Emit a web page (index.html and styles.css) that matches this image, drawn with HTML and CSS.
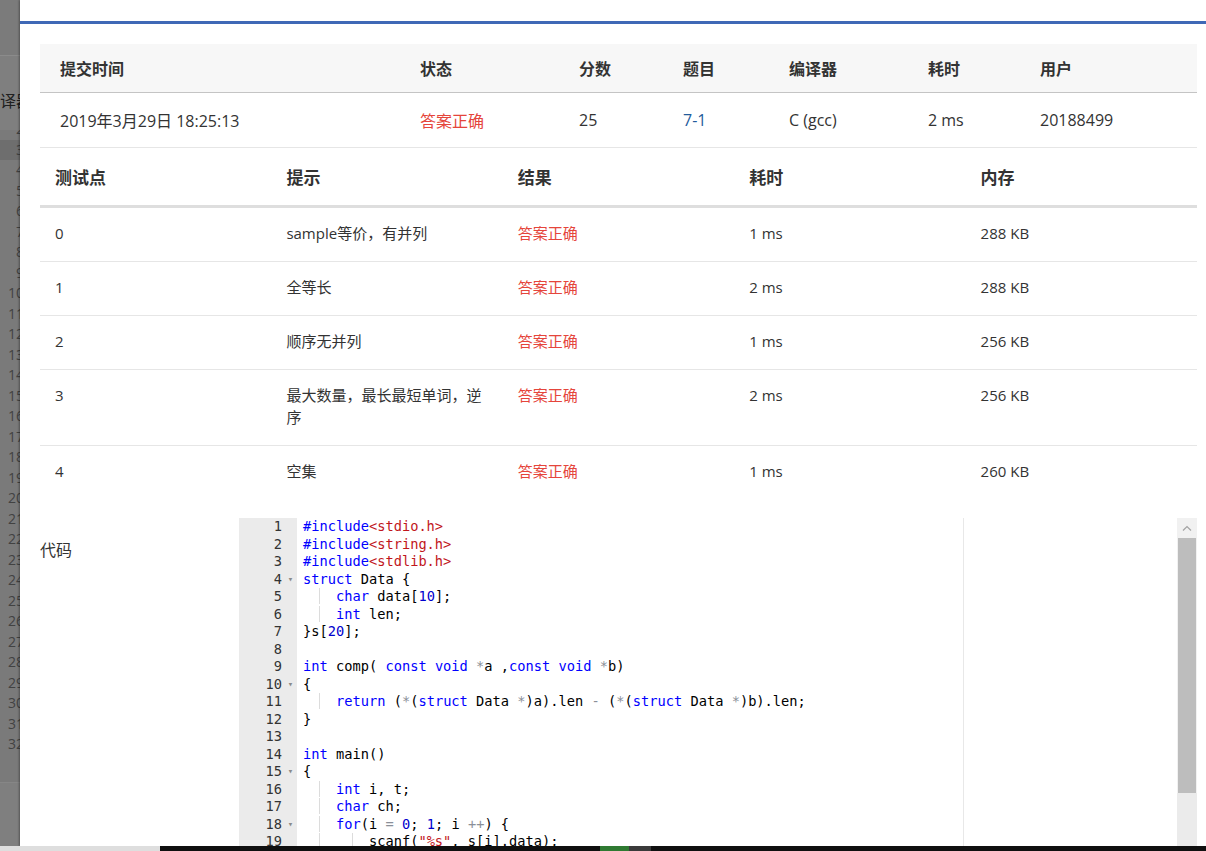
FILE: index.html
```html
<!DOCTYPE html>
<html lang="zh-CN">
<head>
<meta charset="utf-8">
<title>提交详情</title>
<link rel="stylesheet" href="styles.css">
</head>
<body>
<div class="screen">
  <aside class="backdrop">
    <div class="bd-top"></div>
    <div class="bd-label">编译器</div>
    <div class="bd-lines">
      <div class="bd-inner">
        <div class="bd-ln">2</div>
        <div class="bd-ln active">3</div>
        <div class="bd-ln">4</div>
        <div class="bd-ln">5</div>
        <div class="bd-ln">6</div>
        <div class="bd-ln">7</div>
        <div class="bd-ln">8</div>
        <div class="bd-ln">9</div>
        <div class="bd-ln">10</div>
        <div class="bd-ln">11</div>
        <div class="bd-ln">12</div>
        <div class="bd-ln">13</div>
        <div class="bd-ln">14</div>
        <div class="bd-ln">15</div>
        <div class="bd-ln">16</div>
        <div class="bd-ln">17</div>
        <div class="bd-ln">18</div>
        <div class="bd-ln">19</div>
        <div class="bd-ln">20</div>
        <div class="bd-ln">21</div>
        <div class="bd-ln">22</div>
        <div class="bd-ln">23</div>
        <div class="bd-ln">24</div>
        <div class="bd-ln">25</div>
        <div class="bd-ln">26</div>
        <div class="bd-ln">27</div>
        <div class="bd-ln">28</div>
        <div class="bd-ln">29</div>
        <div class="bd-ln">30</div>
        <div class="bd-ln">31</div>
        <div class="bd-ln">32</div>
      </div>
    </div>
    <div class="bd-bottom"></div>
  </aside>

  <main class="modal">
    <div class="modal-bar"></div>
    <div class="modal-body">
      <div class="summary">
        <div class="s-cell s-head">提交时间</div>
        <div class="s-cell s-head">状态</div>
        <div class="s-cell s-head">分数</div>
        <div class="s-cell s-head">题目</div>
        <div class="s-cell s-head">编译器</div>
        <div class="s-cell s-head">耗时</div>
        <div class="s-cell s-head">用户</div>
        <div class="s-cell">2019年3月29日 18:25:13</div>
        <div class="s-cell ok">答案正确</div>
        <div class="s-cell">25</div>
        <div class="s-cell link">7-1</div>
        <div class="s-cell">C (gcc)</div>
        <div class="s-cell">2 ms</div>
        <div class="s-cell">20188499</div>
      </div>

      <div class="cases">
        <div class="c-cell c-head">测试点</div>
        <div class="c-cell c-head">提示</div>
        <div class="c-cell c-head">结果</div>
        <div class="c-cell c-head">耗时</div>
        <div class="c-cell c-head">内存</div>

        <div class="c-cell">0</div>
        <div class="c-cell">sample等价，有并列</div>
        <div class="c-cell ok">答案正确</div>
        <div class="c-cell">1 ms</div>
        <div class="c-cell">288 KB</div>

        <div class="c-cell">1</div>
        <div class="c-cell">全等长</div>
        <div class="c-cell ok">答案正确</div>
        <div class="c-cell">2 ms</div>
        <div class="c-cell">288 KB</div>

        <div class="c-cell">2</div>
        <div class="c-cell">顺序无并列</div>
        <div class="c-cell ok">答案正确</div>
        <div class="c-cell">1 ms</div>
        <div class="c-cell">256 KB</div>

        <div class="c-cell">3</div>
        <div class="c-cell">最大数量，最长最短单词，逆序</div>
        <div class="c-cell ok">答案正确</div>
        <div class="c-cell">2 ms</div>
        <div class="c-cell">256 KB</div>

        <div class="c-cell last">4</div>
        <div class="c-cell last">空集</div>
        <div class="c-cell last ok">答案正确</div>
        <div class="c-cell last">1 ms</div>
        <div class="c-cell last">260 KB</div>
      </div>

      <div class="code-row">
        <div class="code-label">代码</div>
        <div class="editor">
          <div class="gutter">
            <div class="g-ln"><span class="g-num">1</span><span class="g-fold"></span></div>
            <div class="g-ln"><span class="g-num">2</span><span class="g-fold"></span></div>
            <div class="g-ln"><span class="g-num">3</span><span class="g-fold"></span></div>
            <div class="g-ln"><span class="g-num">4</span><span class="g-fold">▾</span></div>
            <div class="g-ln"><span class="g-num">5</span><span class="g-fold"></span></div>
            <div class="g-ln"><span class="g-num">6</span><span class="g-fold"></span></div>
            <div class="g-ln"><span class="g-num">7</span><span class="g-fold"></span></div>
            <div class="g-ln"><span class="g-num">8</span><span class="g-fold"></span></div>
            <div class="g-ln"><span class="g-num">9</span><span class="g-fold"></span></div>
            <div class="g-ln"><span class="g-num">10</span><span class="g-fold">▾</span></div>
            <div class="g-ln"><span class="g-num">11</span><span class="g-fold"></span></div>
            <div class="g-ln"><span class="g-num">12</span><span class="g-fold"></span></div>
            <div class="g-ln"><span class="g-num">13</span><span class="g-fold"></span></div>
            <div class="g-ln"><span class="g-num">14</span><span class="g-fold"></span></div>
            <div class="g-ln"><span class="g-num">15</span><span class="g-fold">▾</span></div>
            <div class="g-ln"><span class="g-num">16</span><span class="g-fold"></span></div>
            <div class="g-ln"><span class="g-num">17</span><span class="g-fold"></span></div>
            <div class="g-ln"><span class="g-num">18</span><span class="g-fold">▾</span></div>
            <div class="g-ln"><span class="g-num">19</span><span class="g-fold"></span></div>
          </div>
          <div class="code">
            <div class="print-margin"></div>
<div class="ln"><span class="k">#include</span><span class="s">&lt;stdio.h&gt;</span></div>
<div class="ln"><span class="k">#include</span><span class="s">&lt;string.h&gt;</span></div>
<div class="ln"><span class="k">#include</span><span class="s">&lt;stdlib.h&gt;</span></div>
<div class="ln"><span class="k">struct</span> Data {</div>
<div class="ln"><span class="ig">    </span><span class="k">char</span> data[<span class="n">10</span>];</div>
<div class="ln"><span class="ig">    </span><span class="k">int</span> len;</div>
<div class="ln">}s[<span class="n">20</span>];</div>
<div class="ln"> </div>
<div class="ln"><span class="k">int</span> comp( <span class="k">const</span> <span class="k">void</span> <span class="o">*</span>a ,<span class="k">const</span> <span class="k">void</span> <span class="o">*</span>b)</div>
<div class="ln">{</div>
<div class="ln"><span class="ig">    </span><span class="k">return</span> (<span class="o">*</span>(<span class="k">struct</span> Data <span class="o">*</span>)a).len <span class="o">-</span> (<span class="o">*</span>(<span class="k">struct</span> Data <span class="o">*</span>)b).len;</div>
<div class="ln">}</div>
<div class="ln"> </div>
<div class="ln"><span class="k">int</span> main()</div>
<div class="ln">{</div>
<div class="ln"><span class="ig">    </span><span class="k">int</span> i, t;</div>
<div class="ln"><span class="ig">    </span><span class="k">char</span> ch;</div>
<div class="ln"><span class="ig">    </span><span class="k">for</span>(i <span class="o">=</span> <span class="n">0</span>; <span class="n">1</span>; i <span class="o">++</span>) {</div>
<div class="ln"><span class="ig">    </span><span class="ig">    </span>scanf(<span class="s">"%s"</span>, s[i].data);</div>
          </div>
          <div class="scrollbar">
            <div class="sb-up">
              <svg width="10" height="6" viewBox="0 0 10 6"><path d="M1 5.5 L5 1.5 L9 5.5" fill="none" stroke="#a3a3a3" stroke-width="1.2"/></svg>
            </div>
            <div class="sb-thumb"></div>
            <div class="sb-track"></div>
          </div>
        </div>
      </div>
    </div>
  </main>
</div>
<div class="taskbar">
  <div class="tb-left"></div>
  <div class="tb-main">
    <div class="tb-green"></div>
    <div class="tb-gray"></div>
  </div>
</div>
</body>
</html>
```

FILE: styles.css
```css
* { box-sizing: border-box; }

html, body {
  margin: 0;
  padding: 0;
}

body {
  width: 1206px;
  height: 851px;
  overflow: hidden;
  display: flex;
  flex-direction: column;
  background: #fff;
  font-family: "Open Sans", "Noto Sans CJK SC", sans-serif;
  color: #333;
}

.screen {
  flex: 0 0 846px;
  display: flex;
  overflow: hidden;
}

/* dimmed page behind the dialog */
.backdrop {
  flex: 0 0 20px;
  background: #7f7f7f;
  overflow: hidden;
  display: flex;
  flex-direction: column;
}

.bd-top {
  flex: 0 0 56px;
  background: #7b7b7b;
  border-bottom: 1px solid #8b8b8b;
}

.bd-label {
  flex: 0 0 74px;
  margin-left: -16px;
  padding-top: 32px;
  font-family: "Noto Sans CJK SC", sans-serif;
  font-size: 16px;
  line-height: 24px;
  color: #202020;
  white-space: nowrap;
}

.bd-lines {
  flex: 0 0 652px;
  overflow: hidden;
  background: #7a7a7a;
}

.bd-inner {
  margin-top: -11px;
}

.bd-ln {
  width: 24px;
  text-align: right;
  font-family: "Open Sans", sans-serif;
  font-size: 14px;
  line-height: 20.5px;
  height: 20.5px;
  color: #424242;
}

.bd-ln.active {
  background: #6e6e6e;
}

.bd-bottom {
  flex: 1;
  background: #7f7f7f;
  border-top: 1px solid #868686;
}

/* dialog */
.modal {
  flex: 1;
  background: #fff;
  box-shadow: -1px 0 2px rgba(0, 0, 0, 0.35);
  display: flex;
  flex-direction: column;
  min-width: 0;
}

.modal-bar {
  flex: 0 0 24px;
  border-bottom: 3px solid #3f68b6;
}

.modal-body {
  padding: 20px 9px 0 20px;
  display: flex;
  flex-direction: column;
}

/* summary table */
.summary {
  display: grid;
  grid-template-columns: 360px 159px 104px 106px 139px 112px 1fr;
  font-size: 16px;
}

.s-cell {
  padding-left: 20px;
  height: 55px;
  display: flex;
  align-items: center;
  border-bottom: 1px solid #e6e6e6;
  white-space: nowrap;
}

.s-cell.s-head {
  height: 49px;
  background: #f7f7f7;
  font-weight: 700;
  color: #333;
  border-bottom: 1px solid #c4c4c4;
}

.ok { color: #e5453b; }
.link { color: #235b9b; }

/* test cases table */
.cases {
  display: grid;
  grid-template-columns: repeat(5, 1fr);
  font-size: 15px;
}

.c-cell {
  padding: 14px 15px 17px;
  line-height: 22px;
  border-bottom: 1px solid #e6e6e6;
}

.c-cell.c-head {
  height: 60px;
  padding-top: 18px;
  line-height: 23px;
  font-size: 17px;
  font-weight: 700;
  color: #333;
  border-bottom: 3px solid #dedede;
}

.c-cell.last {
  border-bottom-color: transparent;
}

/* code */
.code-row {
  display: flex;
  margin-top: 18px;
}

.code-label {
  flex: 0 0 199px;
  padding-top: 20px;
  font-size: 16px;
  line-height: 24px;
  color: #333;
}

.editor {
  flex: 1;
  height: 340px;
  display: flex;
  position: relative;
  overflow: hidden;
  font-family: "DejaVu Sans Mono", monospace;
  font-size: 13.7px;
}

.gutter {
  flex: 0 0 58px;
  background: #ebebeb;
  color: #333;
}

.g-ln {
  height: 17.5px;
  line-height: 17.5px;
  display: flex;
  justify-content: flex-end;
}

.g-num {
  text-align: right;
}

.g-fold {
  width: 15px;
  font-size: 9px;
  color: #8a8a8a;
  text-align: center;
  padding-left: 2px;
}

.code {
  flex: 1;
  position: relative;
  padding-left: 6px;
  color: #000;
}

.ln {
  height: 17.5px;
  line-height: 17.5px;
  white-space: pre;
}

.ig {
  background: linear-gradient(#dcdcdc, #dcdcdc) no-repeat 16px 0 / 1px 100%;
}

.k { color: #0000ff; }
.n { color: #0000cd; }
.s { color: #c1161c; }
.o { color: #8a8f98; }

.print-margin {
  position: absolute;
  left: 666px;
  top: 0;
  bottom: 0;
  width: 1px;
  background: #e8e8e8;
}

.scrollbar {
  flex: 0 0 20px;
  display: flex;
  flex-direction: column;
  background: #f1f1f1;
}

.sb-up {
  flex: 0 0 20px;
  display: flex;
  align-items: center;
  justify-content: center;
  background: #f1f1f1;
}

.sb-thumb {
  flex: 0 0 255px;
  background: #bdbdbd;
  margin: 0 1px;
}

.sb-track {
  flex: 1;
  background: #ebebeb;
}

/* bottom taskbar strip */
.taskbar {
  flex: 0 0 5px;
  display: flex;
}

.tb-left {
  flex: 0 0 160px;
  background: #dedede;
}

.tb-main {
  flex: 1;
  background: #101010;
  display: flex;
  padding-left: 440px;
}

.tb-green {
  flex: 0 0 29px;
  background: #2f7a32;
}

.tb-gray {
  flex: 0 0 22px;
  background: #3a3a3a;
}
```
